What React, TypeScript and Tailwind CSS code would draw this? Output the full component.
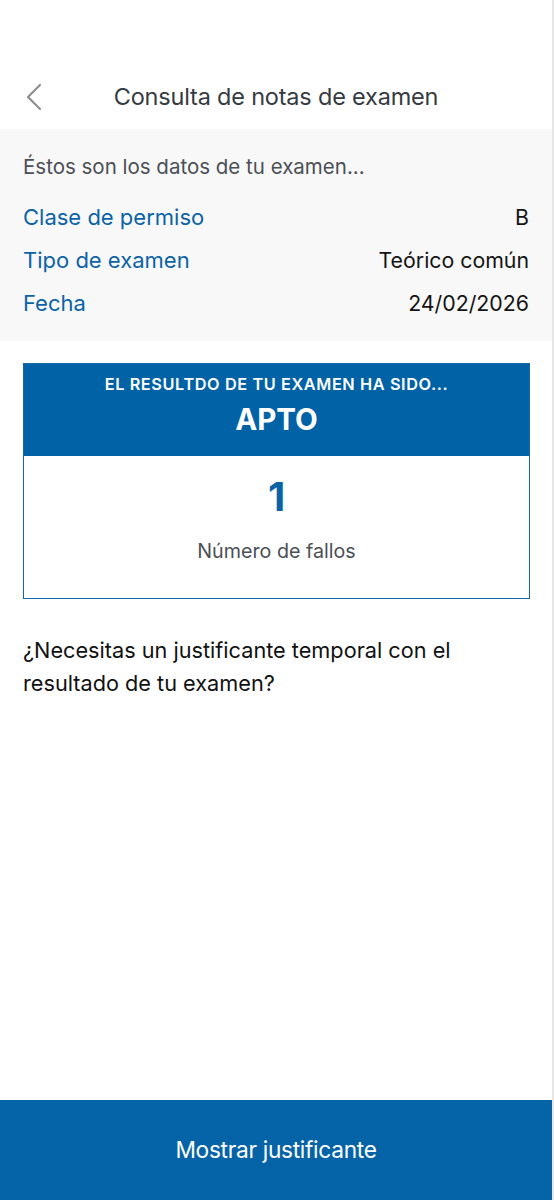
import React from "react";

export default function App() {
  const font = { fontFamily: 'Inter, "Noto Sans", sans-serif' };
  return (
    <div className="w-[554px] h-[1200px] bg-white flex flex-col relative" style={font}>
      <div className="absolute right-0 top-0 h-full w-[2px] bg-[#e6e6e6]" />
      <div className="h-[64px]" />
      <div className="h-[65px] flex items-center relative">
        <svg className="absolute left-[25px] top-[19px]" width="18" height="28" viewBox="0 0 18 28" fill="none">
          <path d="M15 2 L3 14 L15 26" stroke="#8e8e8e" strokeWidth="2.2" strokeLinecap="round" strokeLinejoin="round" />
        </svg>
        <div className="w-full text-center text-[23.5px] text-[#363a42] tracking-[-0.2px] pr-[2px]">Consulta de notas de examen</div>
      </div>
      <div className="bg-[#f8f8f8] mr-[2px] px-[23px] pt-[22px] pb-[21px] flex flex-col">
        <div className="text-[20.5px] text-[#4b4f56] leading-[32px]">Éstos son los datos de tu examen...</div>
        <div className="mt-[18px] flex flex-col gap-[10px]">
          {[
            ["Clase de permiso", "B"],
            ["Tipo de examen", "Teórico común"],
            ["Fecha", "24/02/2026"],
          ].map(([k, v]) => (
            <div key={k} className="flex justify-between items-center h-[33px]">
              <span className="text-[#0b63a6] text-[22px]">{k}</span>
              <span className="text-[#141414] text-[21.3px]">{v}</span>
            </div>
          ))}
        </div>
      </div>
      <div className="ml-[23px] mr-[24px] mt-[22px] border-[1.5px] border-[#1467a8] flex flex-col">
        <div className="bg-[#0262a6] h-[92px] flex flex-col items-center pt-[9px] text-white">
          <div className="text-[16.3px] font-semibold tracking-[0.6px] leading-[22px]">EL RESULTDO DE TU EXAMEN HA SIDO...</div>
          <div className="text-[29.5px] font-bold leading-[36px] mt-[6px]">APTO</div>
        </div>
        <div className="h-[142px] flex flex-col items-center pt-[18px]">
          <div className="text-[40px] font-bold text-[#0b63a6] leading-[46px]">1</div>
          <div className="text-[19.7px] text-[#4b4f56] mt-[17px]">Número de fallos</div>
        </div>
      </div>
      <div className="px-[23px] mt-[35px] text-[21.7px] leading-[33px] text-[#111]">
        ¿Necesitas un justificante temporal con el resultado de tu examen?
      </div>
      <div className="flex-1" />
      <div className="h-[100px] bg-[#0564a8] mr-[2px] flex items-center justify-center text-white text-[22.7px] tracking-[-0.3px]">
        Mostrar justificante
      </div>
    </div>
  );
}
